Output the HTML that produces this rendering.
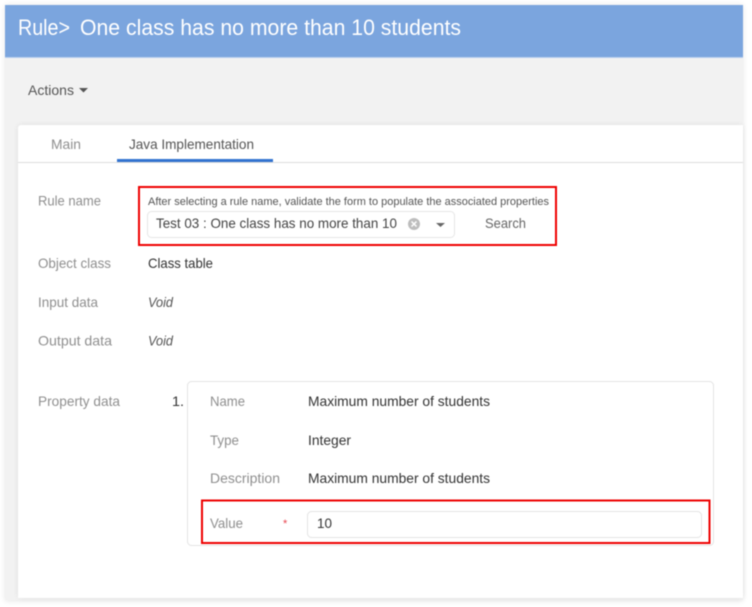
<!DOCTYPE html>
<html><head><meta charset="utf-8"><style>
html,body{margin:0;padding:0;background:#fff;width:752px;height:607px;overflow:hidden}
svg{display:block;filter:blur(.4px)}
text{font-family:"Liberation Sans",sans-serif;font-size:14px;fill:#333}
.l{fill:#8f8f8f}
</style></head><body>
<svg width="752" height="607" viewBox="0 0 752 607" xmlns="http://www.w3.org/2000/svg">
<defs>
<filter id="s" x="-5%" y="-5%" width="110%" height="110%"><feGaussianBlur stdDeviation="3"/></filter>
</defs>
<rect x="5" y="5" width="738" height="596" fill="#000" opacity=".1" filter="url(#s)"/>
<rect x="5" y="5" width="738" height="595" fill="#f2f2f2"/>
<rect x="5" y="5" width="738" height="52" fill="#7ba5de"/>
<rect x="5" y="57" width="738" height="1" fill="#b9cfee"/>
<text x="18" y="35" style="font-size:22px;fill:#fff" textLength="52" lengthAdjust="spacingAndGlyphs">Rule&gt;</text>
<text x="80" y="35" style="font-size:22px;fill:#fff" textLength="381" lengthAdjust="spacingAndGlyphs">One class has no more than 10 students</text>
<text x="28" y="95" style="fill:#555" textLength="46" lengthAdjust="spacingAndGlyphs">Actions</text>
<path d="M79 88h9l-4.500 4.500z" fill="#555"/>

<rect x="18" y="125" width="725" height="473" rx="3" fill="#000" opacity=".08" filter="url(#s)"/>
<path d="M18 128a3 3 0 0 1 3-3H743V598H18z" fill="#fff"/>
<text x="51" y="149" class="l" textLength="30" lengthAdjust="spacingAndGlyphs">Main</text>
<text x="129" y="149" style="fill:#555" textLength="125" lengthAdjust="spacingAndGlyphs">Java Implementation</text>
<rect x="18" y="162" width="725" height="1" fill="#ddd"/>
<rect x="117" y="159" width="156" height="3" fill="#3273d0"/>

<text x="38" y="205.500" class="l" textLength="63" lengthAdjust="spacingAndGlyphs">Rule name</text>
<text x="148" y="205" style="font-size:11px;fill:#555" textLength="401" lengthAdjust="spacingAndGlyphs">After selecting a rule name, validate the form to populate the associated properties</text>
<rect x="147.500" y="211.500" width="307" height="26" rx="4" fill="#fff" stroke="#e6e6e6"/>
<text x="156" y="228" style="fill:#444" textLength="241" lengthAdjust="spacingAndGlyphs">Test 03 : One class has no more than 10</text>
<circle cx="414" cy="224" r="6" fill="#bdbdbd"/>
<path d="M411.500 221.500l5 5m0-5l-5 5" stroke="#fff" stroke-width="1.500"/>
<path d="M436 223h9l-4.500 4z" fill="#666"/>
<text x="485" y="228" style="fill:#666" textLength="41" lengthAdjust="spacingAndGlyphs">Search</text>
<rect x="139" y="187" width="417" height="58" fill="none" stroke="#ee0000" stroke-width="2"/>

<text x="38" y="268" class="l" textLength="73" lengthAdjust="spacingAndGlyphs">Object class</text>
<text x="148" y="268" textLength="65" lengthAdjust="spacingAndGlyphs">Class table</text>
<text x="38" y="307" class="l" textLength="60" lengthAdjust="spacingAndGlyphs">Input data</text>
<text x="148" y="307" font-style="italic" style="fill:#555" textLength="25" lengthAdjust="spacingAndGlyphs">Void</text>
<text x="38" y="345.500" class="l" textLength="74" lengthAdjust="spacingAndGlyphs">Output data</text>
<text x="148" y="345.500" font-style="italic" style="fill:#555" textLength="25" lengthAdjust="spacingAndGlyphs">Void</text>
<text x="38" y="406" class="l" textLength="82" lengthAdjust="spacingAndGlyphs">Property data</text>
<text x="172" y="406" textLength="12" lengthAdjust="spacingAndGlyphs">1.</text>

<rect x="187.500" y="381.500" width="526" height="164" rx="4" fill="#fff" stroke="#e3e3e3"/>
<text x="210" y="406" class="l" textLength="35" lengthAdjust="spacingAndGlyphs">Name</text>
<text x="308" y="406" textLength="182" lengthAdjust="spacingAndGlyphs">Maximum number of students</text>
<text x="210" y="445" class="l" textLength="29" lengthAdjust="spacingAndGlyphs">Type</text>
<text x="308" y="445" textLength="43" lengthAdjust="spacingAndGlyphs">Integer</text>
<text x="210" y="483" class="l" textLength="70" lengthAdjust="spacingAndGlyphs">Description</text>
<text x="308" y="483" textLength="182" lengthAdjust="spacingAndGlyphs">Maximum number of students</text>
<text x="210" y="528" class="l" textLength="33" lengthAdjust="spacingAndGlyphs">Value</text>
<text x="283" y="527" style="font-size:11px;fill:#e8404a">*</text>
<rect x="307.500" y="511.500" width="394" height="26" rx="4" fill="#fff" stroke="#e3e3e3"/>
<text x="317" y="528" textLength="15" lengthAdjust="spacingAndGlyphs">10</text>
<rect x="202" y="500.500" width="507.500" height="42.500" fill="none" stroke="#ee0000" stroke-width="2"/>
</svg>
</body></html>
